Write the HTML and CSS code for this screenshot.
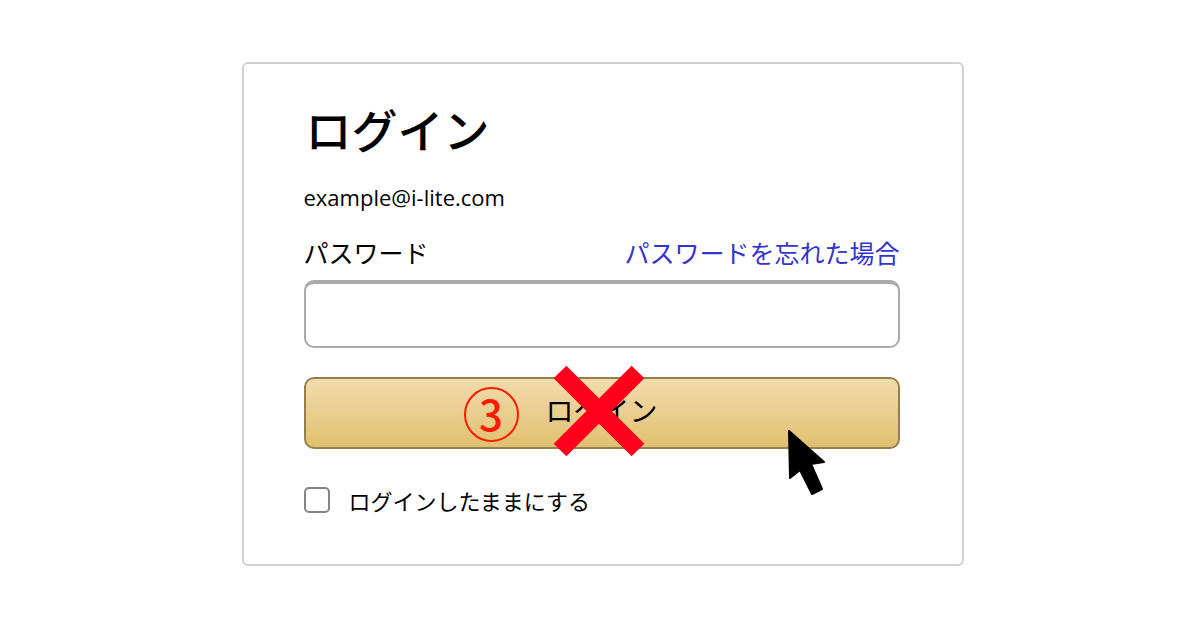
FILE: index.html
```html
<!DOCTYPE html>
<html lang="ja">
<head>
<meta charset="utf-8">
<meta name="viewport" content="width=device-width, initial-scale=1">
<title>ログイン</title>
<link rel="stylesheet" href="styles.css">
</head>
<body>
<main class="page">
  <form class="card">
    <h1 class="title">ログイン</h1>
    <p class="email">example@i-lite.com</p>
    <div class="field-head">
      <label for="password">パスワード</label>
      <a class="forgot" href="#">パスワードを忘れた場合</a>
    </div>
    <input class="password" id="password" type="password">
    <div class="action">
      <button class="submit" type="button">ログイン</button>
      <span class="step">3</span>
      <svg class="cross" viewBox="0 0 92 92" aria-hidden="true"><path d="M7 7 85 85M85 7 7 85"/></svg>
      <svg class="cursor" viewBox="0 0 40 68" aria-hidden="true"><path d="M2 2 37 33 24 35 35 60 25 65 13 41 3 49Z"/></svg>
    </div>
    <div class="remember">
      <input class="check" id="keep" type="checkbox">
      <label for="keep">ログインしたままにする</label>
    </div>
  </form>
</main>
</body>
</html>
```
FILE: styles.css
```css
* {
  box-sizing: border-box;
}

body {
  margin: 0;
  background: #fff;
  color: #000;
  font-family: "Noto Sans CJK JP", sans-serif;
}

.page {
  display: flex;
  justify-content: center;
  padding: 62px 16px 62px 21px;
}

.card {
  width: 100%;
  max-width: 722px;
  padding: 34px 62px 48px 60px;
  border: 2px solid #d0d0d0;
  border-radius: 6px;
}

.title {
  margin: 0;
  padding-left: 2px;
  font-size: 46px;
  font-weight: 500;
  line-height: 60px;
}

.email {
  margin: 23px 0 0;
  font-family: "Open Sans", sans-serif;
  font-size: 22px;
  line-height: 32px;
}

.field-head {
  display: flex;
  flex-wrap: wrap;
  justify-content: space-between;
  margin-top: 21px;
  font-size: 25px;
  line-height: 36px;
}

.forgot {
  color: #3434cc;
  text-decoration: none;
}

.password {
  display: block;
  width: 100%;
  height: 68px;
  margin-top: 10px;
  padding: 0 16px;
  border: 2px solid #aaa;
  border-top-width: 4px;
  border-radius: 10px;
  background: #fff;
  font: inherit;
  font-size: 25px;
}

.action {
  position: relative;
  margin-top: 29px;
}

.submit {
  display: block;
  width: 100%;
  height: 72px;
  padding: 0 0 6px;
  border: 2px solid #95804c;
  border-radius: 10px;
  background: linear-gradient(#f1dcae, #e1c070);
  color: #000;
  font-family: inherit;
  font-size: 28px;
}

.step {
  position: absolute;
  top: 10px;
  left: calc(50% - 138px);
  width: 55px;
  height: 55px;
  border: 2px solid #ff1a00;
  border-radius: 50%;
  color: #ff1a00;
  font-size: 42px;
  font-weight: 500;
  line-height: 48px;
  text-align: center;
}

.cross {
  position: absolute;
  top: -12px;
  left: calc(50% - 49px);
  width: 92px;
  height: 92px;
  fill: none;
  stroke: #ff001c;
  stroke-width: 18;
}

.cursor {
  position: absolute;
  top: 52px;
  right: 73px;
  width: 40px;
  height: 68px;
  fill: #000;
  stroke: #000;
  stroke-width: 2;
  stroke-linejoin: round;
}

.remember {
  display: flex;
  align-items: center;
  gap: 19px;
  margin-top: 35px;
  font-size: 22px;
  line-height: 32px;
}

.check {
  appearance: none;
  flex: none;
  width: 26px;
  height: 26px;
  margin: 0;
  border: 2px solid #858585;
  border-radius: 5px;
  background: #fff;
}

.check:checked {
  background: #95804c;
}
```
